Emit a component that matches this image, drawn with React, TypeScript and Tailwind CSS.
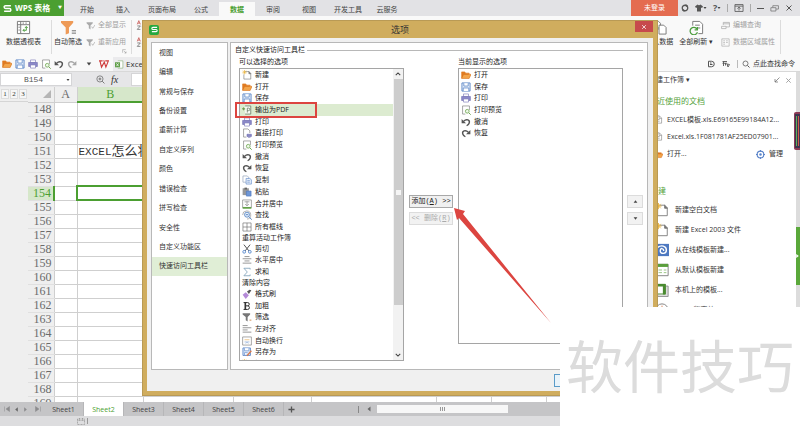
import React from "react";

type IconProps = { name: string; className?: string };

const shapes: Record<string, React.ReactNode> = {
  newDoc: (
    <>
      <path d="M5 2.500h6l3 3v9H3V7" fill="#fff" stroke="#777" />
      <path d="M11 2v4h3.500" fill="#777" stroke="#777" />
      <path d="M4 0v7M.5 3.500h7M1.500 1l5 5M6.500 1l-5 5" stroke="#e8b23a" />
    </>
  ),
  open: (
    <>
      <path d="M1 13V3h5l1.500 2H13v2" fill="#e07b22" stroke="#e07b22" />
      <path d="M1 13.500 4 7h12l-3 6.500z" fill="#f3a54b" stroke="#d9731c" />
    </>
  ),
  save: (
    <>
      <path d="M1.500 1.500h13v13h-13z" fill="#eef4fc" stroke="#5d87c8" strokeWidth="1.500" />
      <path d="M4.500 2v4.500h7V2M3.500 14.500V9.500h9v5" fill="#fff" stroke="#5d87c8" strokeWidth="1.300" />
    </>
  ),
  pdf: (
    <>
      <path d="M5 1.500h9v13H5" fill="#f7fbf4" stroke="#6b7d66" strokeWidth="1.300" />
      <path d="M8.500 12V5h2a2 2 0 0 1 0 4h-2" fill="none" stroke="#6b7d66" strokeWidth="1.300" />
      <path d="M0 6l3-3v2h2v2H3v2z" fill="#6c9a50" />
    </>
  ),
  print: (
    <>
      <path d="M4 1.500h8V6H4z" fill="#fff" stroke="#7b78b8" />
      <path d="M1 5.500h14v6.500H1z" fill="#8b88c8" stroke="#716eb0" />
      <path d="M4 9.500h8v5H4z" fill="#fff" stroke="#7b78b8" />
    </>
  ),
  directPrint: (
    <>
      <path d="M7 14.500H2.500v-13h7l3 3V8" fill="#fff" stroke="#777" />
      <path d="M8 10h7v3.500H8zM9.500 15h4" fill="#8b88c8" stroke="#716eb0" />
    </>
  ),
  preview: (
    <>
      <path d="M7 14.500H2.500v-13h11V8" fill="#fff" stroke="#777" />
      <circle cx="10" cy="10" r="3" fill="#eef7e8" stroke="#6fa653" strokeWidth="1.300" />
      <path d="m12.500 12.500 3 3" stroke="#6fa653" strokeWidth="1.600" />
    </>
  ),
  undo: (
    <>
      <path d="M4 7c5-5 11-2 9 3-.5 2-2 3-4 4" fill="none" stroke="#555" strokeWidth="2.200" />
      <path d="M1 3v7h7z" fill="#555" />
    </>
  ),
  redo: (
    <>
      <path d="M12 7C7 2 1 5 3 10c.5 2 2 3 4 4" fill="none" stroke="#555" strokeWidth="2.200" />
      <path d="M15 3v7H8z" fill="#555" />
    </>
  ),
  copy: (
    <>
      <path d="M1.500 1.500h7l2 2v8h-9z" fill="#fff" stroke="#8a9bb5" />
      <path d="M6.500 5.500h6l2.500 2v7H6.500z" fill="#e8f0fb" stroke="#5d87c8" />
      <path d="M8.500 9h4M8.500 11.500h4" stroke="#5d87c8" />
    </>
  ),
  paste: (
    <>
      <path d="M1 2h10v11H1z" fill="#999" />
      <path d="M4 1h4v3H4z" fill="#666" />
      <path d="M7 6.500h7.500v8H7z" fill="#6f97d6" stroke="#4d78c0" />
    </>
  ),
  merge: (
    <>
      <path d="M1 1.500h14v12H1z" fill="#fff" stroke="#777" />
      <path d="M1 13h14v2.500H1z" fill="#5a9e3c" />
      <path d="M4 4.500h8M8 4v6M5 8l3 3 3-3" stroke="#777" fill="none" />
    </>
  ),
  find: (
    <>
      <path d="M1 8a6.500 6.500 0 1 1 7 6.500" fill="none" stroke="#888" />
      <circle cx="8" cy="7.500" r="4" fill="#e8f1fb" stroke="#4f7fbf" strokeWidth="1.300" />
      <path d="M6 7.500h4M11 10.500l4.500 5" stroke="#4f7fbf" strokeWidth="1.500" />
    </>
  ),
  borders: <path d="M1.500 1.500h13v13h-13zM8 1.500v13M1.500 8h13" fill="#fff" stroke="#666" />,
  cut: (
    <>
      <path d="m3 1 8 10M13 1 5 11" stroke="#555" strokeWidth="1.600" />
      <circle cx="3.500" cy="12.500" r="2.200" fill="none" stroke="#5b8bd0" strokeWidth="1.500" />
      <circle cx="12.500" cy="12.500" r="2.200" fill="none" stroke="#5b8bd0" strokeWidth="1.500" />
    </>
  ),
  center: <path d="M4 2.500h8M1 6h14M4 9.500h8M1 13h14" stroke="#777" strokeWidth="1.200" />,
  sum: <path d="M13 4V2H3l5.500 6L3 14h10v-2" fill="none" stroke="#7c9fb8" strokeWidth="1.300" />,
  brush: (
    <>
      <path d="m1 9 5-4 5 5-5 6z" fill="#b48ad8" />
      <path d="m8 4 3 4 4-6-3-1z" fill="#555" />
    </>
  ),
  bold: (
    <>
      <path d="M2.500 2.500H9a2.600 2.600 0 0 1 0 5.200H6M9 7.700a2.900 2.900 0 0 1 0 5.800H2.500" fill="none" stroke="#333" strokeWidth="1.600" />
      <path d="M5.300 2v12" stroke="#333" strokeWidth="2.600" />
    </>
  ),
  filter: (
    <>
      <path d="M1 2h12v2L9 8v7l-3-2V8L1 4z" fill="#777" />
      <path d="M12 13h3" stroke="#d08a4a" strokeWidth="1.500" />
    </>
  ),
  left: <path d="M1 2.500h8M1 6h14M1 9.500h8M1 13h14" stroke="#777" strokeWidth="1.200" />,
  wrap: (
    <>
      <path d="M1 1.500h14v13H1z" fill="#fff" stroke="#777" />
      <path d="M4 6h8" stroke="#e3a84f" />
      <path d="M4 9.500h8M6 12l2-2 2 2" stroke="#7c9fd0" fill="none" />
    </>
  ),
  saveAs: (
    <>
      <path d="M1.500 1.500h12v12h-12z" fill="#dce8f8" stroke="#5d87c8" strokeWidth="1.400" />
      <path d="M4 2v4h7V2M4 13V9h5" fill="#fff" stroke="#5d87c8" />
      <path d="m8 14 7-8" stroke="#d9784a" strokeWidth="2" />
    </>
  ),
  pivot: (
    <>
      <path d="M1.500 1.500h13v13h-13zM1.500 5h13M5 1.500v13" fill="#fff" stroke="#777" />
      <path d="M11 7v4H7.500M9.500 8.500 11 7l1.500 1.500M9 9.500 7.500 11 9 12.500" stroke="#4a9c3c" fill="none" />
      <path d="M7 3.300h1.500M10 3.300h1.500M3.300 7v1.500M3.300 10v1.500" stroke="#777" />
    </>
  ),
  bigFilter: (
    <>
      <path d="M0 1h13v2L8.500 8v6L5 15.500V8L0 3z" fill="#ee9a57" />
      <path d="M11.500 11.500H16M11.500 14H16" stroke="#666" />
    </>
  ),
  grayFilter: (
    <>
      <path d="M1 2h11v2L8 8v7l-3-2V8L1 4z" fill="#aaa" />
      <path d="m10 10 2 3 4-6" fill="none" stroke="#aaa" strokeWidth="1.300" />
    </>
  ),
  docs: (
    <>
      <path d="M1 1.500h6l2 2v6H1z" fill="#fff" stroke="#777" />
      <path d="M7.500 5.500h5l2.500 2.500v7H7.500z" fill="#fff" stroke="#777" />
      <path d="M3 12l4-4" stroke="#4a9c3c" />
    </>
  ),
  refresh: (
    <>
      <path d="M4 6V1.500h7.500l3 3v10H10M6.500 5.500h5M9 8.500h3" fill="#fff" stroke="#777" />
      <path d="M8.500 9.500A4 4 0 1 0 9 13M9 7.500v3H6" fill="none" stroke="#4a9c3c" strokeWidth="1.300" />
    </>
  ),
  query: <path d="M4 7V2.500h11v8H9M4 5h11M1 9.500h8v4H1z" fill="none" stroke="#aaa" strokeWidth="1.300" />,
  region: <path d="M1.500 1.500h13v13h-13zM4 5h3M9 5h3M4 8h3M9 8h3M4 11h3" fill="none" stroke="#aaa" strokeWidth="1.200" />,
  sort: (
    <>
      <path d="M2 7l2.500-6L7 7M3 5h3" fill="none" stroke="#c6504c" strokeWidth="1.200" />
      <path d="M2 9.500h5L2 15h5" fill="none" stroke="#666" strokeWidth="1.200" />
      <path d="M12 1v13M9.500 11l2.500 3 2.500-3" fill="none" stroke="#666" />
    </>
  ),
  wps: (
    <>
      <path d="M0 3h5M1.500 3l2.500 10 4.500-8 2.500 8 4-10h-5" fill="none" stroke="#cf3a3a" strokeWidth="1.800" />
      <path d="M5 3h4" stroke="#cf3a3a" strokeWidth="1.200" />
    </>
  ),
  sheetFile: (
    <>
      <path d="M5 1.500h9v13H5" fill="#fff" stroke="#7aa56a" />
      <path d="M0 4h9v9H0z" fill="#5f9e48" />
      <path d="m2.500 6 4 5M6.500 6l-4 5" stroke="#fff" strokeWidth="1.300" />
    </>
  ),
  logo: <path d="M14 3H4.500a2.400 2.400 0 0 0 0 5h7a2.400 2.400 0 0 1 0 5H2" fill="none" stroke="#fff" strokeWidth="2.600" />,
  search: (
    <>
      <circle cx="7" cy="7" r="5" fill="none" stroke="#555" strokeWidth="1.500" />
      <path d="m11 11 4 4" stroke="#555" strokeWidth="2" />
    </>
  ),
  zoom: (
    <>
      <circle cx="7" cy="7" r="5.500" fill="none" stroke="#666" strokeWidth="1.300" />
      <path d="M4.500 7h5M7 4.500v5M11 11l4 4" stroke="#666" strokeWidth="1.500" />
    </>
  ),
  globe: (
    <>
      <circle cx="8" cy="8" r="5.500" fill="none" stroke="#555" strokeWidth="2.600" />
      <path d="m9 0 5 3-4 3zM7 16l-5-3 4-3z" fill="#555" />
    </>
  ),
  shirt: <path d="m0 5 5-4c2 2 4 2 6 0l5 4-2 3-2-1v8H4V7L2 8z" fill="#555" />,
  pinBox: <path d="M1.500 2.500h13v11h-13zM1.500 5h13M8 12V7M5.500 9 8 6.500 10.500 9" fill="none" stroke="#555" strokeWidth="1.300" />,
  restore: <path d="M1.500 6.500h9v6h-9zM5 6V3h10v6h-4" fill="none" stroke="#666" strokeWidth="1.200" />,
  close: <path d="m3 3 10 10M13 3 3 13" stroke="currentColor" strokeWidth="2" />,
  backup: <path d="M3 2.500h6a5.500 5.500 0 0 1 0 11H3zM6 6h3M6 9h5" fill="none" stroke="#555" strokeWidth="2" />,
  ribbonTool: <path d="M1 3h9M1 6.500h9M3 3v9M7 6v5M10 8l5 1-3 5z" fill="none" stroke="#555" strokeWidth="1.800" />,
  gear: (
    <>
      <circle cx="8" cy="8" r="6" fill="none" stroke="#5b84c9" strokeWidth="2" />
      <circle cx="8" cy="8" r="2.200" fill="#5b84c9" />
      <path d="M8 0v3M8 13v3M0 8h3M13 8h3" stroke="#5b84c9" strokeWidth="2" />
    </>
  ),
  file: <path d="M2.500 1.500h7l4 4v9h-11zM9 1.500V6h4.500M5 8h5M5 11h5" fill="#fff" stroke="#777" />,
  online: (
    <>
      <path d="M0 1h16v14H0z" fill="#4d78c0" />
      <path d="M3 5c4-3 10-2 10 3s-7 5-7 1 4-3 4 0" fill="none" stroke="#fff" strokeWidth="1.600" />
    </>
  ),
  template: (
    <>
      <path d="M1 1.500h14v13H1z" fill="#fff" stroke="#777" />
      <path d="M1 1h14v3.500H1z" fill="#5a9e3c" />
      <path d="M4 8h4M10 8h3M4 11h4M10 11h3" stroke="#8fbf78" />
    </>
  ),
  localTemplate: (
    <>
      <path d="M3 3.500h12v12H3z" fill="#ddd" stroke="#888" />
      <path d="M1 1.500h11v11H1z" fill="#fff" stroke="#4a8a30" />
      <path d="M1 1h11v3H1zM9 4h3v9H9z" fill="#4a8a30" />
    </>
  ),
  clock: (
    <>
      <circle cx="8" cy="8" r="7" fill="#fff" stroke="#777" />
      <path d="M8 3v6H4" fill="none" stroke="#d9784a" />
    </>
  ),
  dock: <path d="m13 3-9 9M4 6v6h6" fill="none" stroke="#666" strokeWidth="1.400" />,
  launcher: <path d="M2 12V2h10M6 6l7 7M13 8v5H8" fill="none" stroke="#888" strokeWidth="1.500" />,
  first: <path d="M3 3v10M13 3 6 8l7 5z" fill="#8b8b8d" stroke="#8b8b8d" />,
  prev: <path d="m11 3-6 5 6 5z" fill="#666" />,
  next: <path d="m5 3 6 5-6 5z" fill="#8b8b8d" />,
  last: <path d="M13 3v10M3 3l7 5-7 5z" fill="#8b8b8d" stroke="#8b8b8d" />,
  plus: <path d="M8 1v14M1 8h14" stroke="#555" strokeWidth="3" />,
  macro: <path d="M1 4h14v11H1zM1 7h14M5 2v4M11 2v4" fill="none" stroke="#888" strokeWidth="1.200" strokeDasharray="2 1" />,
  up: <path d="m2 12 6-8 6 8z" fill="#444" />,
  down: <path d="m2 4 6 8 6-8z" fill="#444" />,
  chevronUp: <path d="m2 11 6-6 6 6" fill="none" stroke="#444" strokeWidth="2.800" />,
  chevronDown: <path d="m2 5 6 6 6-6" fill="none" stroke="#444" strokeWidth="2.800" />,
};

function Icon({ name, className = "size-[10px]" }: IconProps) {
  return (
    <svg viewBox="0 0 16 16" className={`shrink-0 ${className}`} aria-hidden="true">
      {shapes[name]}
    </svg>
  );
}

const ribbonTabs = ["开始", "插入", "页面布局", "公式", "数据", "审阅", "视图", "开发工具", "云服务"];

const available: { icon?: string; label: string }[] = [
  { icon: "newDoc", label: "新建" },
  { icon: "open", label: "打开" },
  { icon: "save", label: "保存" },
  { icon: "pdf", label: "输出为PDF" },
  { icon: "print", label: "打印" },
  { icon: "directPrint", label: "直接打印" },
  { icon: "preview", label: "打印预览" },
  { icon: "undo", label: "撤消" },
  { icon: "redo", label: "恢复" },
  { icon: "copy", label: "复制" },
  { icon: "paste", label: "粘贴" },
  { icon: "merge", label: "合并居中" },
  { icon: "find", label: "查找" },
  { icon: "borders", label: "所有框线" },
  { label: "重算活动工作簿" },
  { icon: "cut", label: "剪切" },
  { icon: "center", label: "水平居中" },
  { icon: "sum", label: "求和" },
  { label: "清除内容" },
  { icon: "brush", label: "格式刷" },
  { icon: "bold", label: "加粗" },
  { icon: "filter", label: "筛选" },
  { icon: "left", label: "左对齐" },
  { icon: "wrap", label: "自动换行" },
  { icon: "saveAs", label: "另存为" },
  { icon: "newDoc", label: "插入批注" },
];

const current = [
  { icon: "open", label: "打开" },
  { icon: "save", label: "保存" },
  { icon: "print", label: "打印" },
  { icon: "preview", label: "打印预览" },
  { icon: "undo", label: "撤消" },
  { icon: "redo", label: "恢复" },
];

const categories = [
  "视图", "编辑", "常规与保存", "备份设置", "重新计算", "自定义序列",
  "颜色", "错误检查", "拼写检查", "安全性", "自定义功能区", "快速访问工具栏",
];

const rows = Array.from({ length: 22 }, (_, i) => 148 + i);
const columns = ["A", "B", "", "", "", "", "", ""];

function TitleBar() {
  return (
    <header className="flex h-4 shrink-0 bg-[#e2e2e5]">
      <button className="flex w-16 shrink-0 items-center gap-[3px] bg-[#4b9f31] pl-[3px] text-[8px] font-bold whitespace-nowrap text-white">
        <Icon name="logo" className="size-[9px]" />
        WPS 表格
        <span className="ml-auto pr-[2px] text-[4px]">▼</span>
      </button>
      <nav className="ml-[5px] flex">
        {ribbonTabs.map((t) => (
          <button
            key={t}
            className={`min-w-[36px] px-[7px] pt-[3px] whitespace-nowrap ${
              t === "数据" ? "mt-[2px] bg-[#f9f9f9] pb-[2px] font-bold text-[#4b9f31]" : "text-[#444]"
            }`}
          >
            {t}
          </button>
        ))}
      </nav>
      <button className="ml-auto w-[47px] bg-[#e46c50] text-white">未登录</button>
      <div className="flex w-[122px] items-center justify-between pr-[7px] pl-[3px] text-[#555]">
        <button aria-label="在线"><Icon name="globe" className="size-2" /></button>
        <button aria-label="皮肤" className="flex items-center"><Icon name="shirt" className="size-2" /><Icon name="down" className="size-1" /></button>
        <button aria-label="帮助" className="flex items-center text-[9px] font-bold">?<Icon name="down" className="size-1" /></button>
        <span className="h-2 w-px bg-[#aaa]" />
        <button aria-label="折叠功能区"><Icon name="pinBox" /></button>
        <span className="h-2 w-px bg-[#aaa]" />
        <button aria-label="最小化" className="h-px w-[7px] bg-[#555]" />
        <button aria-label="还原"><Icon name="restore" className="size-[9px]" /></button>
        <button aria-label="关闭"><Icon name="close" className="size-2" /></button>
      </div>
    </header>
  );
}

function BigButton({ icon, label }: { icon: string; label: string }) {
  return (
    <button className="flex flex-col items-center gap-[2px] whitespace-nowrap">
      <Icon name={icon} className="size-[15px]" />
      <span className="leading-[10px]">{label}</span>
    </button>
  );
}

function SmallPair({ items }: { items: [string, string][] }) {
  return (
    <div className="flex flex-col gap-[7px] text-[#a0a0a0]">
      {items.map(([icon, label]) => (
        <button key={label} className="flex h-[10px] items-center gap-[3px] whitespace-nowrap">
          <Icon name={icon} className="size-[9px]" />
          {label}
        </button>
      ))}
    </div>
  );
}

function Ribbon() {
  return (
    <section className="flex h-[41px] shrink-0 items-start bg-[#f9f9f9] pt-1">
      <div className="ml-[6px] flex">
        <BigButton icon="pivot" label="数据透视表" />
      </div>
      <span className="ml-[10px] h-[34px] w-px bg-[#dcdcdc]" />
      <div className="ml-[2px] flex">
        <BigButton icon="bigFilter" label="自动筛选" />
      </div>
      <div className="ml-[4px]">
        <SmallPair items={[["grayFilter", "全部显示"], ["grayFilter", "重新应用"]]} />
      </div>
      <div className="flex h-[34px] items-end">
        <Icon name="launcher" className="-ml-1 size-[5px]" />
      </div>
      <span className="ml-1 h-[34px] w-px bg-[#dcdcdc]" />
      <div className="ml-1 flex flex-col gap-[7px]">
        <Icon name="sort" />
        <Icon name="sort" />
      </div>
      <div className="ml-auto flex gap-[6px]">
        <BigButton icon="docs" label="导入数据" />
        <BigButton icon="refresh" label="全部刷新 ▾" />
        <div className="ml-[2px]">
          <SmallPair items={[["query", "编辑查询"], ["region", "数据区域属性"]]} />
        </div>
      </div>
      <span className="mr-[19px] ml-[5px] h-[34px] w-px bg-[#dcdcdc]" />
    </section>
  );
}

function QuickAccess() {
  return (
    <section className="flex h-[15px] shrink-0 items-center border-b border-[#d8d8d8] bg-[#f9f9f9] pl-[2px]">
      <div className="flex gap-[3px]">
        {current.map((c) => (
          <button key={c.label} aria-label={c.label} className={c.icon === "redo" ? "opacity-50" : ""}>
            <Icon name={c.icon} className="size-[10px]" />
          </button>
        ))}
      </div>
      <Icon name="down" className="ml-[9px] size-[6px]" />
      <Icon name="wps" className="ml-[7px] size-[10px]" />
      <button className="ml-[4px] flex h-full items-center gap-[2px] bg-[#ebebed] px-[2px] text-[8px] whitespace-nowrap">
        <Icon name="sheetFile" className="size-[9px]" />
        Excel.xls
      </button>
      <div className="ml-auto flex items-center gap-[7px] pr-[5px]">
        <Icon name="backup" className="size-[8px]" />
        <Icon name="ribbonTool" className="size-[8px]" />
        <span className="h-2 w-px bg-[#bbb]" />
        <button className="-ml-[3px] flex items-center gap-[3px] whitespace-nowrap">
          <Icon name="search" className="size-[8px]" />
          点此查找命令
        </button>
      </div>
    </section>
  );
}

function FormulaBar() {
  return (
    <div className="flex h-[15px] shrink-0 items-center bg-[#e6e6e8] py-px">
      <div className="flex h-full w-[72px] items-center border border-[#d5d5d7] bg-white">
        <input
          aria-label="名称框"
          defaultValue="B154"
          className="w-full min-w-0 text-center font-['Liberation_Mono',monospace] text-[8px] text-[#555] outline-none"
        />
        <Icon name="down" className="mr-px size-[4px]" />
      </div>
      <Icon name="zoom" className="ml-6 size-[9px]" />
      <span className="ml-[6px] w-[20px] font-['Liberation_Serif',serif] text-[10px] italic">fx</span>
      <input aria-label="编辑栏" className="h-full min-w-0 flex-1 border border-[#d5d5d7] bg-white outline-none" />
    </div>
  );
}

function Grid() {
  return (
    <div className="flex min-h-0 flex-1 overflow-hidden bg-white">
      <div className="w-7 shrink-0 bg-[#efefef]">
        <div className="flex h-[15px] items-center gap-px border-b border-[#d5d5d5] pl-px">
          {[1, 2, 3].map((n) => (
            <button key={n} className="h-[10px] w-2 border border-[#ddd] bg-[#f6f6f6] font-['Liberation_Serif',serif] text-[7px] leading-[8px]">
              {n}
            </button>
          ))}
        </div>
      </div>
      <table className="w-full table-fixed border-collapse self-start font-['Liberation_Serif','Noto_Sans_CJK_SC',serif] text-[12px] leading-[13px] text-[#6b6b6b]">
        <colgroup>
          <col className="w-[26px]" />
          <col className="w-[23px]" />
          <col className="w-[66px]" />
          <col className="w-[90px]" />
          <col className="w-[78px]" />
          <col className="w-[125px]" />
          <col className="w-[55px]" />
          <col className="w-[55px]" />
          <col />
        </colgroup>
        <thead>
          <tr className="h-[15px] bg-[#efefef]">
            <th className="border-r border-b border-[#cfcfcf] p-0">
              <svg viewBox="0 0 8 8" className="mr-[3px] ml-auto size-[8px]"><path d="M8 0v8H0z" fill="#b5b5b5" /></svg>
            </th>
            {columns.map((c, i) => (
              <th
                key={i}
                className={`p-0 font-normal ${
                  c === "B"
                    ? "border-b-2 border-b-[#4b9f31] bg-[#d6e7ca] text-[#4b9f31]"
                    : "border-r border-b border-[#cfcfcf]"
                }`}
              >
                {c}
              </th>
            ))}
          </tr>
        </thead>
        <tbody>
          {rows.map((r) => (
            <tr key={r} className="h-[14px]">
              <th
                className={`border-y border-y-[#e0e0e0] p-0 pr-[2px] text-right font-normal ${
                  r === 154
                    ? "border-r-2 border-r-[#4b9f31] bg-[#d6e7ca] text-[#4b9f31]"
                    : "border-r border-r-[#cfcfcf] bg-[#efefef]"
                }`}
              >
                {r}
              </th>
              {columns.map((c, i) => (
                <td
                  key={i}
                  className={`p-0 ${
                    c === "B" && r === 154 ? "border-2 border-[#4b9f31]" : "border border-[#cfcfcf]"
                  }`}
                >
                  {c === "B" && r === 151 && (
                    <div className="h-[13px] pl-px font-['Liberation_Mono','Noto_Sans_CJK_SC',monospace] text-[11px] whitespace-nowrap text-[#333]">
                      EXCEL<span className="text-[13px]">怎么将</span>
                    </div>
                  )}
                </td>
              ))}
            </tr>
          ))}
        </tbody>
      </table>
    </div>
  );
}

function TaskPane() {
  const templates = [
    ["newDoc", "新建空白文档"],
    ["newDoc", "新建 Excel 2003 文件"],
    ["online", "从在线模板新建..."],
    ["template", "从默认模板新建"],
    ["localTemplate", "本机上的模板..."],
    ["clock", "Excel 版高效..."],
  ];
  return (
    <aside className="flex w-[155px] shrink-0 bg-white">
      <div className="flex min-w-0 flex-1 flex-col pl-[4px] whitespace-nowrap">
        <div className="flex h-4 items-center">
          <span>新建工作簿 ▾</span>
          <button aria-label="停靠" className="ml-auto"><Icon name="dock" className="size-[8px]" /></button>
          <button aria-label="关闭窗格" className="mr-1 ml-[4px] text-[#999]"><Icon name="close" className="size-[7px]" /></button>
        </div>
        <h2 className="mt-[7px] h-[12px] text-[8px] leading-[12px] text-[#55a23c]">最近使用的文档</h2>
        <ul className="mt-[4px]">
          {["EXCEL模板.xls.E69165E99184A12...", "Excel.xls.1F081781AF25ED07901..."].map((f) => (
            <li key={f} className="flex h-[17px] items-center gap-[4px] pl-[5px]">
              <Icon name="file" className="size-[9px]" />
              <a href="#recent">{f}</a>
            </li>
          ))}
          <li className="flex h-[18px] items-center gap-[4px] pl-[5px]">
            <Icon name="open" className="size-[9px]" />
            <a href="#open">打开...</a>
            <a href="#manage" className="mr-[13px] ml-auto flex items-center gap-[4px]">
              <Icon name="gear" className="size-[9px]" />
              管理
            </a>
          </li>
        </ul>
        <h2 className="mt-[22px] h-[12px] pl-px text-[8px] leading-[12px] text-[#55a23c]">新建</h2>
        <ul className="mt-[3px]">
          {templates.map(([icon, label]) => (
            <li key={label} className="flex h-[20px] items-center gap-[6px] pl-[6px]">
              <Icon name={icon} className="size-[14px]" />
              <a href="#template">{label}</a>
            </li>
          ))}
        </ul>
      </div>
      <div className="flex w-1 shrink-0 flex-col bg-[#dcdcdc] pt-[155px]">
        <button aria-label="展开侧栏" className="flex h-[58px] items-center bg-[#5aa83a]">
          <svg viewBox="0 0 4 6" className="h-[4px] w-[3px]"><path d="m0 0 4 3-4 3z" fill="#fff" /></svg>
        </button>
      </div>
    </aside>
  );
}

function SheetBar() {
  return (
    <footer className="shrink-0">
      <div className="flex h-[14px] items-center bg-[#c5c5c7]">
        <div className="flex w-[44px] items-center gap-[2px] pl-[3px]">
          <Icon name="first" className="size-[8px]" />
          <Icon name="prev" className="size-[7px]" />
          <Icon name="next" className="size-[7px]" />
          <Icon name="last" className="ml-[3px] size-[8px]" />
        </div>
        {[1, 2, 3, 4, 5, 6].map((n) => (
          <button
            key={n}
            className={`h-full w-10 border-r border-[#b6b6b8] pt-px ${n === 2 ? "bg-white text-[#4b9f31]" : "text-[#444]"}`}
          >
            Sheet{n}
          </button>
        ))}
        <button aria-label="新建工作表" className="ml-[4px]"><Icon name="plus" className="size-[7px]" /></button>
        <span className="ml-[63px] h-[7px] w-px bg-[#888]" />
        <Icon name="prev" className="ml-[6px] size-[8px]" />
        <div className="ml-1 flex h-2 w-[131px] items-center justify-center gap-px bg-[#f7f7f7]">
          <i className="h-1 w-px bg-[#999]" />
          <i className="h-1 w-px bg-[#999]" />
          <i className="h-1 w-px bg-[#999]" />
        </div>
      </div>
      <div className="flex h-[10px] items-center bg-[#dddddf] pl-[77px]">
        <Icon name="macro" className="size-[8px]" />
        <span className="ml-[2px] h-[6px] w-px bg-[#999]" />
      </div>
    </footer>
  );
}

function AvailableList() {
  return (
    <div className="mb-2 flex min-h-0 flex-1 border border-[#a5a5a5] bg-white">
      <div className="min-w-0 flex-1 overflow-hidden">
        <ul className="flex h-[301px] flex-col" aria-labelledby="available-label">
          {available.map((it) =>
            it.icon ? (
              <li
                key={it.label}
                className={`flex min-h-0 flex-1 items-center gap-[3px] pl-[2px] ${it.icon === "pdf" ? "bg-[#dcebd0]" : ""}`}
              >
                <Icon name={it.icon} className="size-[10px]" />
                {it.label}
              </li>
            ) : (
              <li key={it.label} className="flex h-[10px] shrink-0 items-center pl-[2px]">
                {it.label}
              </li>
            ),
          )}
        </ul>
      </div>
      <div className="flex w-[10px] flex-col items-center bg-[#f2f2f2]">
        <button aria-label="向上滚动" className="flex h-[10px] items-center"><Icon name="chevronUp" className="size-[6px]" /></button>
        <div className="flex w-[9px] flex-1 items-center justify-center bg-[#cdcdcd]">
          <span className="size-[5px] bg-[#f5f5f5]" />
        </div>
        <button aria-label="向下滚动" className="mt-[45px] flex h-[10px] items-center"><Icon name="chevronDown" className="size-[6px]" /></button>
      </div>
    </div>
  );
}

function OptionsDialog() {
  return (
    <div
      role="dialog"
      aria-labelledby="options-title"
      className="absolute inset-x-[142px] top-[20px] bottom-[30px] flex flex-col border border-[#b99a55] bg-[#d0ad5e] px-[4px] pb-[4px]"
    >
      <div className="grid h-[17px] shrink-0 grid-cols-[1fr_auto_1fr] items-center">
        <span className="ml-[2px] flex size-[10px] items-center justify-center rounded-[2px] bg-[#27a83f]">
          <Icon name="logo" className="size-[7px]" />
        </span>
        <h1 id="options-title" className="text-[9px] text-[#333]">选项</h1>
        <button aria-label="关闭对话框" className="flex h-[11px] w-[18px] items-center justify-center self-start justify-self-end bg-[#c74a4c] text-white">
          <Icon name="close" className="size-[6px]" />
        </button>
      </div>
      <div className="flex min-h-0 flex-1 flex-col bg-[#f0f0f0] pt-1 pr-[5px] pl-[4px]">
        <div className="flex min-h-0 flex-1 gap-[2px]">
          <nav className="w-[77px] shrink-0 border border-[#b8b8b8] bg-white">
            <ul className="flex h-[233px] flex-col">
              {categories.map((c) => (
                <li key={c} className={`flex flex-1 ${c === "快速访问工具栏" ? "bg-[#e0eed6]" : ""}`}>
                  <button className="flex-1 pl-[7px] text-left text-[#333]">{c}</button>
                </li>
              ))}
            </ul>
          </nav>
          <section className="flex min-w-0 flex-1 flex-col border border-[#b8b8b8] bg-white pt-px pr-1 pl-1 text-[#222]">
            <div className="flex h-[12px] shrink-0 items-center gap-[2px] whitespace-nowrap">
              <h2>自定义快速访问工具栏</h2>
              <span className="h-px flex-1 bg-[#b8b8b8]" />
            </div>
            <div className="flex min-h-0 flex-1 pl-1">
              <div className="flex min-w-0 flex-1 flex-col">
                <h3 id="available-label" className="h-[12px] shrink-0 leading-[12px]">可以选择的选项</h3>
                <AvailableList />
              </div>
              <div className="mx-[5px] flex w-11 shrink-0 flex-col gap-[4px] pt-[139px]">
                <button className="h-[13px] border border-[#a8a8a8] bg-[#f0f0f0] font-['Liberation_Mono','Noto_Sans_CJK_SC',monospace] leading-[11px] whitespace-nowrap">
                  添加(<u>A</u>) &gt;&gt;
                </button>
                <button disabled className="h-[13px] border border-[#dcdcdc] bg-[#f2f2f2] font-['Liberation_Mono','Noto_Sans_CJK_SC',monospace] leading-[11px] whitespace-nowrap text-[#aaa]">
                  &lt;&lt; 删除(<u>R</u>)
                </button>
              </div>
              <div className="flex min-w-0 flex-1 flex-col">
                <h3 id="current-label" className="h-[12px] shrink-0 leading-[12px]">当前显示的选项</h3>
                <div className="mb-[25px] flex-1 border border-[#a5a5a5]">
                  <ul className="flex h-[70px] flex-col" aria-labelledby="current-label">
                    {current.map((it) => (
                      <li key={it.label} className="flex flex-1 items-center gap-[3px] pl-[2px]">
                        <Icon name={it.icon} className="size-[10px]" />
                        {it.label}
                      </li>
                    ))}
                  </ul>
                </div>
              </div>
              <div className="ml-1 flex w-4 shrink-0 flex-col gap-[4px] pt-[139px]">
                <button aria-label="上移" className="flex h-[13px] items-center justify-center border border-[#dcdcdc] bg-[#f2f2f2]"><Icon name="up" className="size-[5px]" /></button>
                <button aria-label="下移" className="flex h-[13px] items-center justify-center border border-[#dcdcdc] bg-[#f2f2f2]"><Icon name="down" className="size-[5px]" /></button>
              </div>
            </div>
          </section>
        </div>
        <div className="flex h-[21px] shrink-0 items-center justify-end">
          <button aria-label="确定" className="mr-[50px] h-[13px] w-11 border border-[#5a9bc8] bg-[#e9f3fa]" />
        </div>
      </div>
    </div>
  );
}

export default function App() {
  return (
    <div className="relative flex h-screen w-full flex-col overflow-hidden bg-white font-['Open_Sans','Noto_Sans_CJK_SC',sans-serif] text-[7px] leading-[10px] text-[#333]">
      <TitleBar />
      <Ribbon />
      <QuickAccess />
      <main className="flex min-h-0 flex-1">
        <div className="flex min-w-0 flex-1 flex-col">
          <FormulaBar />
          <Grid />
        </div>
        <TaskPane />
      </main>
      <SheetBar />
      <OptionsDialog />

      {/* floating system widget on the right edge */}
      <div className="absolute top-[112px] right-0 flex h-[38px] w-[6px] justify-center gap-px rounded-l-[2px] border-y-2 border-l border-[#8d3a55] bg-[#3d3550] py-[2px]">
        <span className="w-px bg-[#5fae5a]" />
        <span className="w-px bg-[#d05a4a]" />
      </div>

      {/* highlight frame and pointer annotations */}
      <div className="absolute top-[102px] left-[235px] h-[16px] w-[82px] border-2 border-[#dc4540]" />
      <svg viewBox="0 0 100 118" className="absolute top-[206px] left-[453px] h-[118px] w-[100px]" aria-hidden="true">
        <path d="M1 2 12 5 10 8 98 117 6 12 4 14z" fill="#dc4540" />
      </svg>

      <div className="absolute top-[307px] right-0 bottom-0 flex w-[240px] items-center justify-center bg-white text-[57px] leading-[119px] whitespace-nowrap text-[#dcdcdc]">
        软件技巧
      </div>
    </div>
  );
}
